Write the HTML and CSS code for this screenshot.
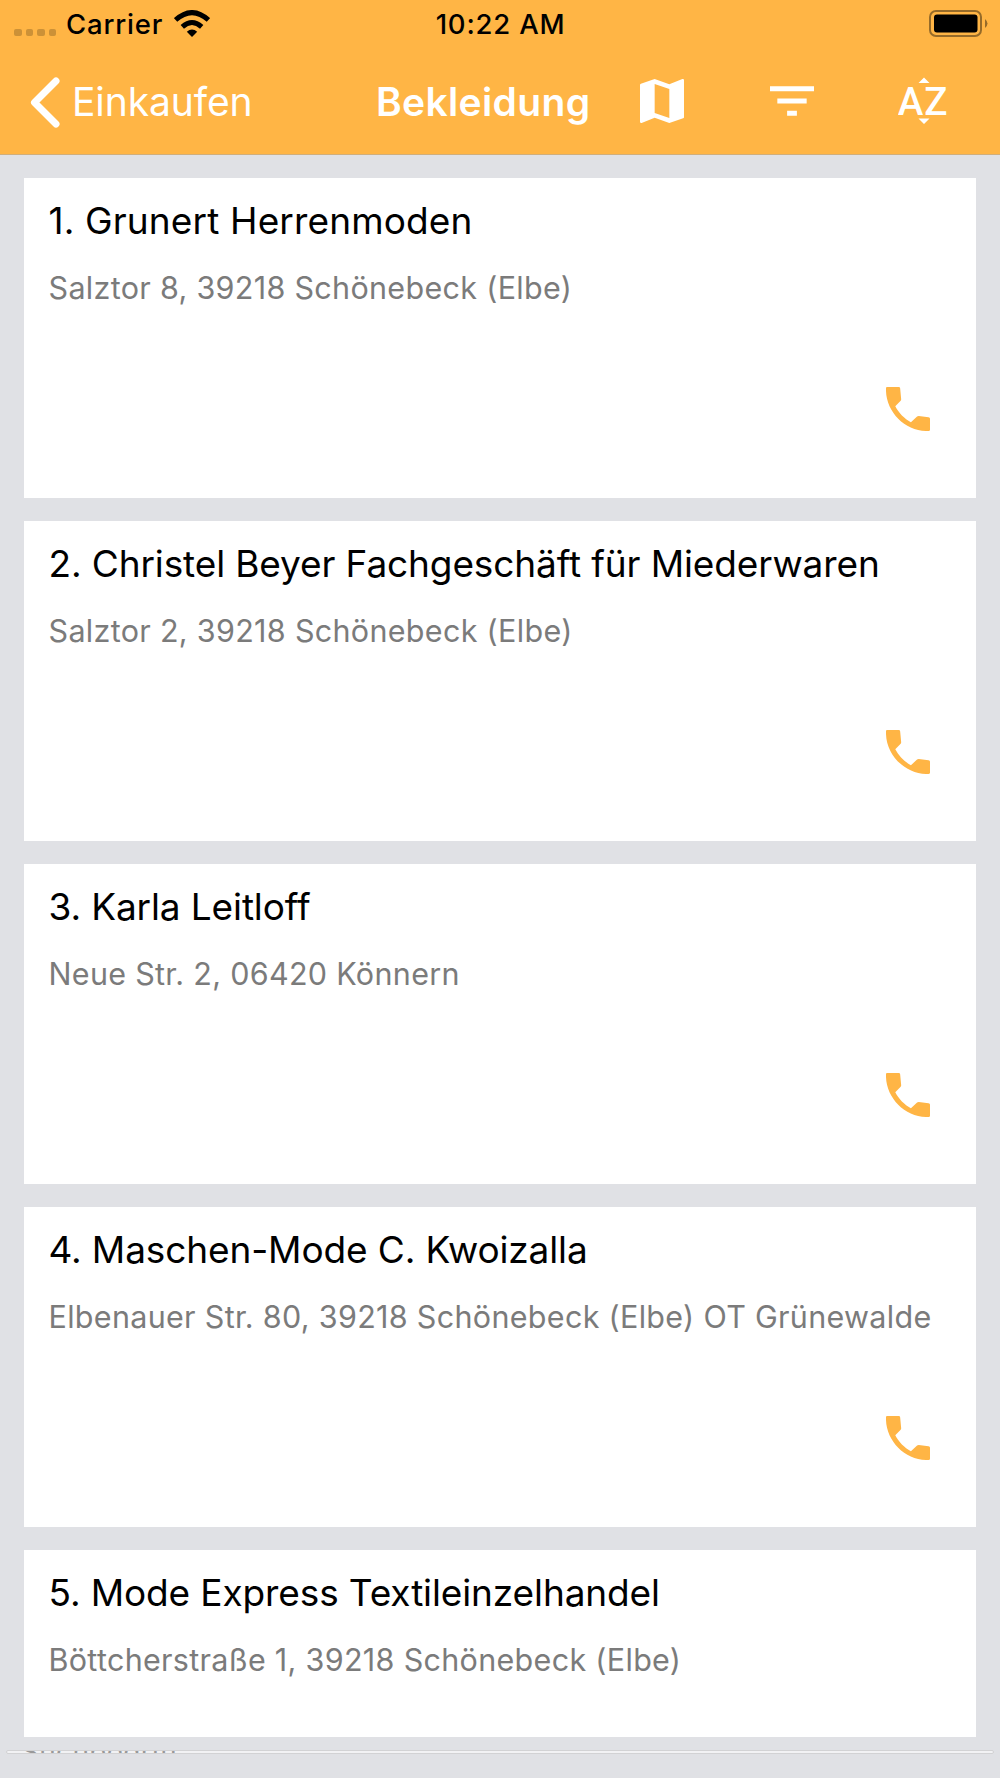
FILE: index.html
```
<!DOCTYPE html>
<html lang="de">
<head>
    <meta charset="UTF-8">
    <meta name="viewport" content="width=device-width, initial-scale=1.0">
    <title>Bekleidung</title>
    <link rel="stylesheet" href="styles.css">
</head>
<body>
    <svg class="symbols" width="0" height="0">
        <symbol id="phone" viewBox="3 3 18 18">
            <path d="M3.6 3h4.5c.4 0 .6.2.7.6l.4 4.3c0 .3 0 .5-.2.7L6.8 10.9c1.4 2.7 3.7 5.1 6.4 6.5l2.4-2.2c.2-.2.5-.3.8-.3l4 .5c.4.1.6.3.6.7v4.3c0 .4-.2.6-.6.6C10.9 21.3 2.7 13.1 3 3.6c0-.4.2-.6.6-.6z"/>
        </symbol>
    </svg>

    <header class="header">
        <div class="status-bar">
            <div class="status-left">
                <span class="signal"><i></i><i></i><i></i><i></i></span>
                <span class="carrier">Carrier</span>
                <svg class="wifi" viewBox="0 0 36 27">
                    <path d="M18 27l-5.2-5.3q5.2-4.2 10.4 0z"/>
                    <path class="arc" d="M8.3 16.8q9.7-8.6 19.4 0M1.6 10q16.4-14.8 32.8 0"/>
                </svg>
            </div>
            <span class="time">10:22 AM</span>
            <div class="status-right">
                <svg class="battery" viewBox="0 0 59 27">
                    <rect class="shell" x="1" y="1" width="51" height="25" rx="6"/>
                    <rect x="5" y="4.5" width="43.5" height="18" rx="3"/>
                    <path class="tip" d="M56 9q5 4.5 0 9z"/>
                </svg>
            </div>
        </div>
        <nav class="nav-bar">
            <a class="back" href="#">
                <svg class="chevron" viewBox="0 0 30 51"><path d="M26 4L4.5 25.5 26 47"/></svg>
                <span>Einkaufen</span>
            </a>
            <h1>Bekleidung</h1>
            <div class="actions">
                <svg class="icon" viewBox="3 3 18 18"><path d="M20.5 3l-.16.03L15 5.1 9 3 3.36 4.9c-.21.07-.36.25-.36.48V20.5c0 .28.22.5.5.5l.16-.03L9 18.9l6 2.1 5.64-1.9c.21-.07.36-.25.36-.48V3.5c0-.28-.22-.5-.5-.5zM15 19l-6-2.11V5l6 2.11V19z"/></svg>
                <svg class="icon" viewBox="3 3 18 18"><path d="M10 18h4v-2h-4v2zM3 6v2h18V6H3zm3 7h12v-2H6v2z"/></svg>
                <svg class="icon icon-az" viewBox="0 0 50 48">
                    <path d="M20.5 6l5.5-5.5L31.500 6zM20.500 41.500L26 47l5.500-5.500z"/>
                    <text x="-.3" y="38">A</text>
                    <text x="26.3" y="38">Z</text>
                </svg>
            </div>
        </nav>
    </header>

    <main class="list">
        <article class="card">
            <h2>1. Grunert Herrenmoden</h2>
            <p>Salztor 8, 39218 Schönebeck (Elbe)</p>
            <svg class="phone"><use href="#phone"/></svg>
        </article>
        <article class="card">
            <h2>2. Christel Beyer Fachgeschäft für Miederwaren</h2>
            <p>Salztor 2, 39218 Schönebeck (Elbe)</p>
            <svg class="phone"><use href="#phone"/></svg>
        </article>
        <article class="card">
            <h2>3. Karla Leitloff</h2>
            <p>Neue Str. 2, 06420 Könnern</p>
            <svg class="phone"><use href="#phone"/></svg>
        </article>
        <article class="card">
            <h2>4. Maschen-Mode C. Kwoizalla</h2>
            <p>Elbenauer Str. 80, 39218 Schönebeck (Elbe) OT Grünewalde</p>
            <svg class="phone"><use href="#phone"/></svg>
        </article>
        <article class="card card-last">
            <h2>5. Mode Express Textileinzelhandel</h2>
            <p>Böttcherstraße 1, 39218 Schönebeck (Elbe)</p>
        </article>
    </main>

    <div class="search">Suchbegriff</div>
</body>
</html>
```
FILE: styles.css
```
* {
    box-sizing: border-box;
}

body {
    margin: 0;
    height: 1778px;
    overflow: hidden;
    background: #e0e1e5;
    color: #000;
    font-family: Inter, "Liberation Sans", sans-serif;
}

.symbols {
    display: block;
}

.header {
    height: 155px;
    background: #ffb545;
    border-bottom: 1px solid #d0ae7c;
}

.status-bar {
    display: grid;
    grid-template-columns: 1fr auto 1fr;
    height: 48px;
    padding: 0 13px 0 14px;
    line-height: 49px;
    font-size: 27.5px;
    font-weight: 450;
    letter-spacing: 0.8px;
}

.status-left {
    display: flex;
}

.signal {
    display: flex;
    gap: 4px;
    width: 52px;
    padding-top: 29px;
}

.signal i {
    width: 7.5px;
    height: 7px;
    border-radius: 2px;
    background: #cc9137;
}

.wifi {
    width: 36px;
    height: 27px;
    margin: 10px 0 0 11px;
}

.wifi .arc {
    fill: none;
    stroke: #000;
    stroke-width: 5;
}

.status-right {
    display: flex;
    justify-content: flex-end;
}

.battery {
    width: 59px;
    height: 27px;
    margin: 10px -1px 0 0;
}

.battery .shell {
    fill: none;
    stroke: #966b29;
    stroke-width: 2;
}

.battery .tip {
    fill: #966b29;
}

.nav-bar {
    display: flex;
    height: 106px;
    padding: 0 52px 0 30px;
    color: #fff;
    font-size: 39px;
    line-height: 108px;
}

.back {
    display: flex;
    width: 346px;
    color: #fff;
    text-decoration: none;
    letter-spacing: -0.1px;
}

.chevron {
    width: 30px;
    height: 51px;
    margin: 28.5px 12px 0 0;
    fill: none;
    stroke: #fff;
    stroke-width: 7px;
    stroke-linecap: round;
    stroke-linejoin: round;
}

h1 {
    margin: 0;
    font-size: 39px;
    font-weight: 600;
    letter-spacing: 0.35px;
    white-space: nowrap;
}

.actions {
    display: flex;
    gap: 86px;
    margin-left: auto;
    padding-top: 31px;
}

.icon {
    width: 44px;
    height: 44px;
    fill: #fff;
}

.icon-az {
    width: 50px;
    height: 48px;
    margin: -2px 0 0 -2px;
    font: 500 38.5px Roboto, sans-serif;
}

.list {
    display: flex;
    flex-direction: column;
    gap: 22.5px;
    padding: 22.5px 24px 0;
}

.card {
    position: relative;
    height: 320.5px;
    padding: 19px 24.5px 0;
    background: #fff;
    white-space: nowrap;
}

.card-last {
    height: 187.5px;
}

h2 {
    margin: 0;
    font-size: 37px;
    font-weight: 400;
    line-height: 48px;
    letter-spacing: -0.12px;
}

.card:first-child h2 {
    letter-spacing: 0.14px;
}

p {
    margin: 24px 0 0;
    color: #7b7b7b;
    font-size: 30.5px;
    line-height: 38.5px;
    letter-spacing: 0.31px;
}

.phone {
    position: absolute;
    right: 46px;
    bottom: 67px;
    width: 44px;
    height: 44px;
    fill: #ffb545;
}

/* collapsed search field, only a strip of it stays visible */
.search {
    height: 4px;
    margin: 13px 6px 0;
    padding-left: 14px;
    overflow: hidden;
    border: 1px solid #d2d2d4;
    background: #f2f2f4;
    border-radius: 2px;
    color: #999;
    font-size: 28px;
    line-height: 2px;
    letter-spacing: 0.3px;
}
```
